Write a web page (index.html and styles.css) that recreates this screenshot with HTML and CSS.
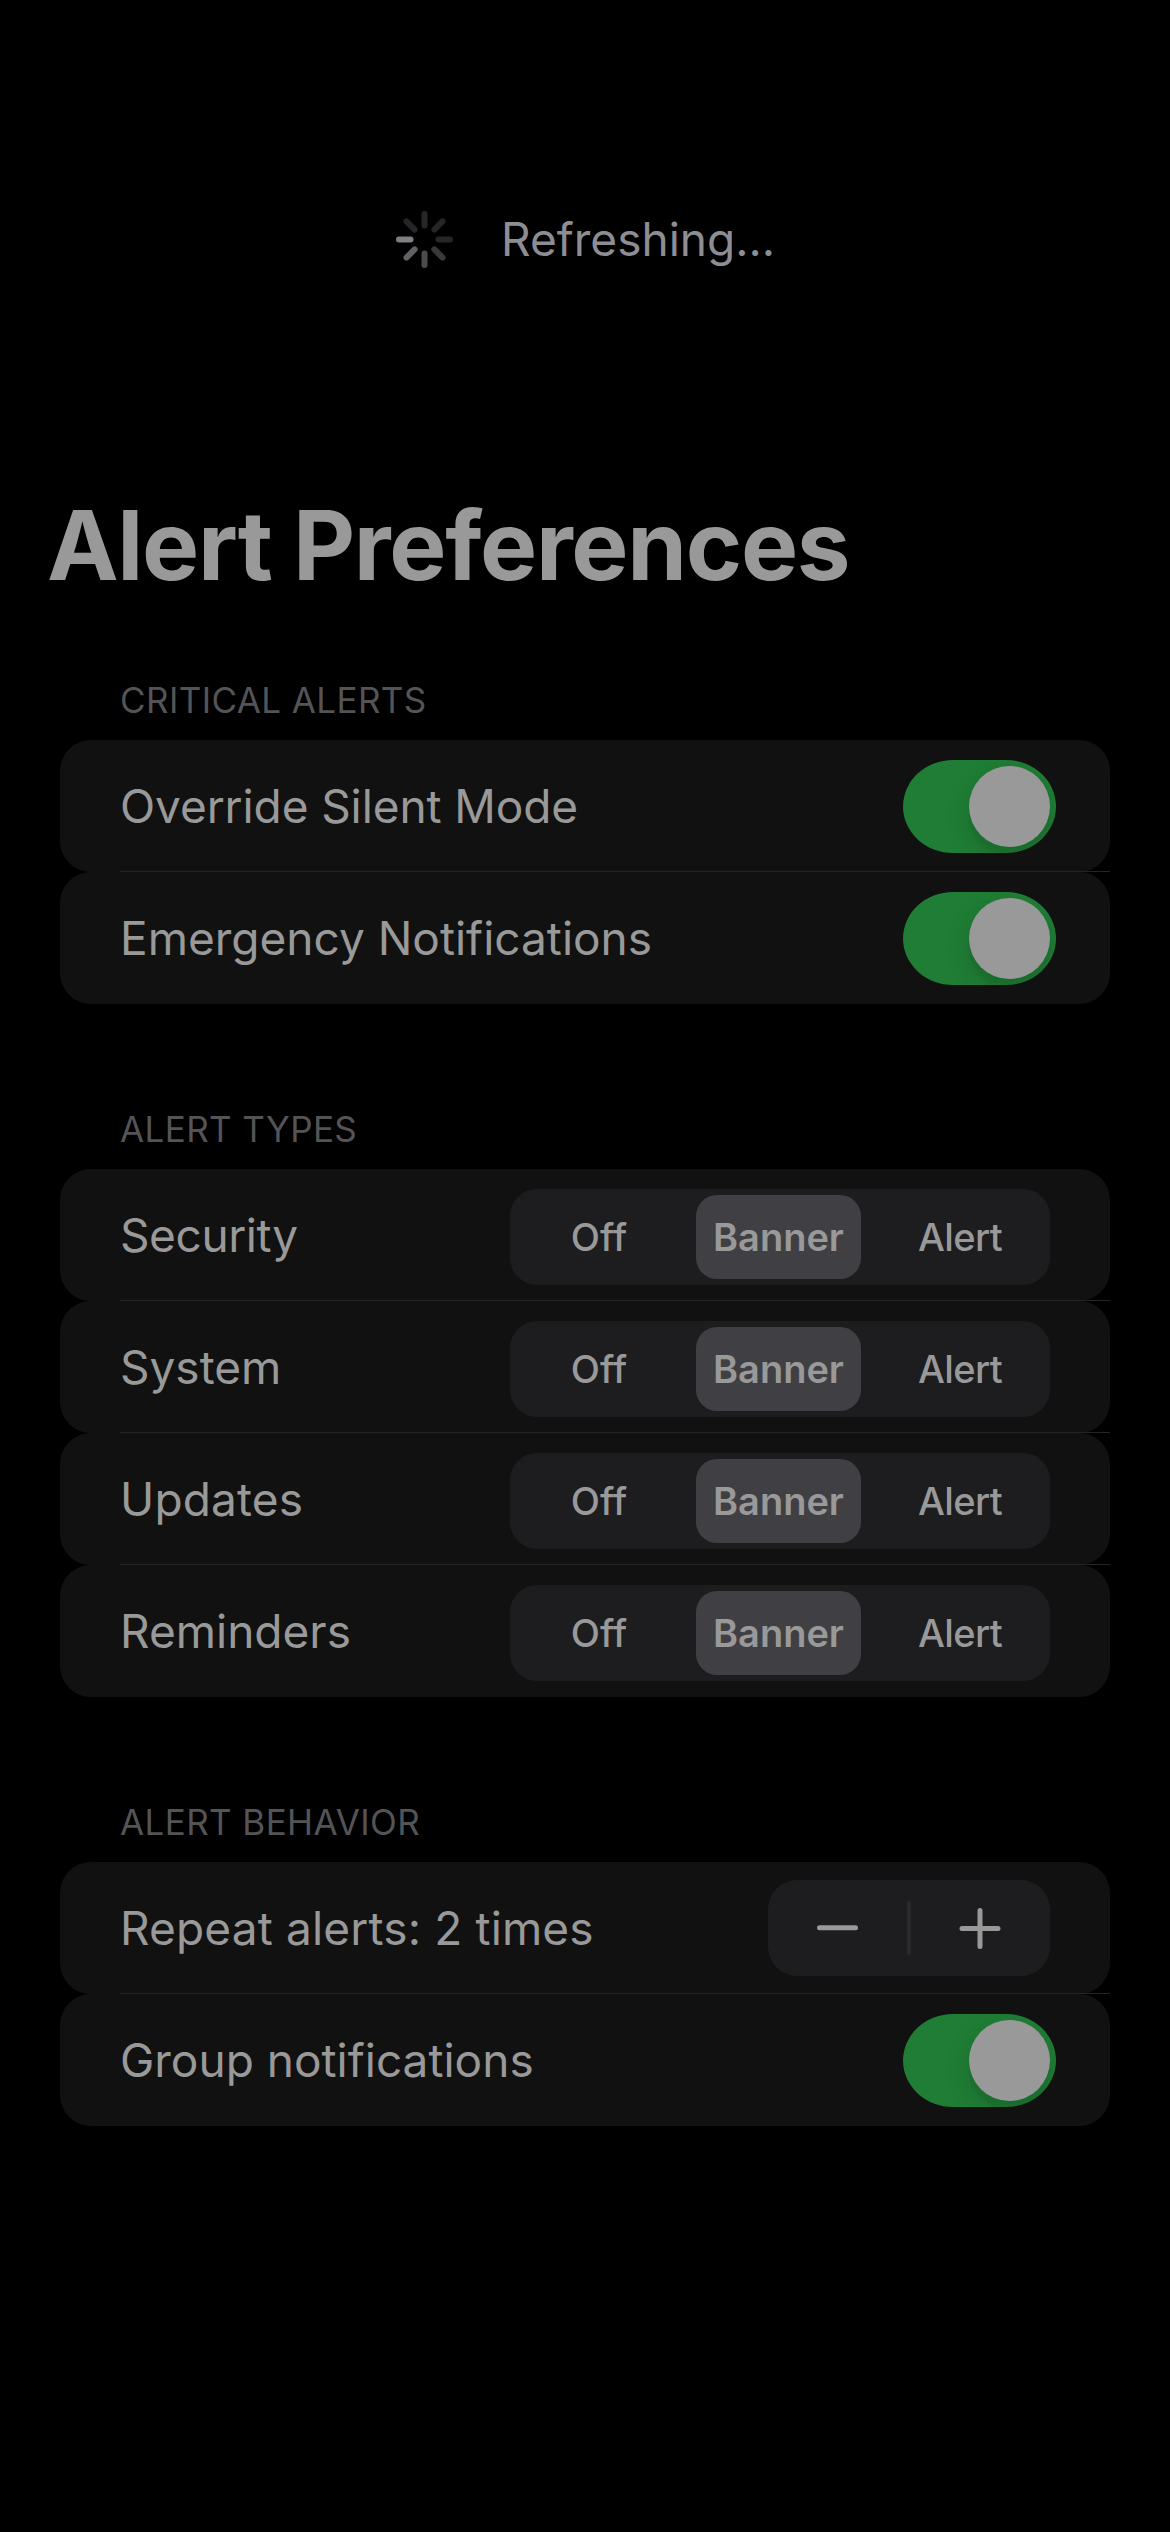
FILE: index.html
```html
<!DOCTYPE html>
<html lang="en">
<head>
<meta charset="utf-8">
<title>Alert Preferences</title>
<link rel="stylesheet" href="styles.css">
</head>
<body>
<div class="refresh">
  <svg class="spinner" viewBox="-28.5 -28.5 57 57" width="57" height="57" fill="none" stroke-width="6" stroke-linecap="round">
    <g stroke="#262628">
      <path d="M0-14V-25.5"/>
      <path d="M0-14V-25.5" transform="rotate(45)"/>
      <path d="M0-14V-25.5" transform="rotate(90)"/>
      <path d="M0-14V-25.5" transform="rotate(315)"/>
    </g>
    <path d="M0-14V-25.5" transform="rotate(135)" stroke="#39393b"/>
    <path d="M0-14V-25.5" transform="rotate(180)" stroke="#4b4b4e"/>
    <path d="M0-14V-25.5" transform="rotate(225)" stroke="#626166"/>
    <path d="M0-14V-25.5" transform="rotate(270)" stroke="#7f7e84"/>
  </svg>
  <span class="refresh-text">Refreshing...</span>
</div>
<main>
  <h1>Alert Preferences</h1>

  <section>
    <h2>CRITICAL ALERTS</h2>
    <div class="row"><span class="label snug">Override Silent Mode</span><div class="switch"><i class="knob"></i></div></div>
    <div class="row"><span class="label">Emergency Notifications</span><div class="switch"><i class="knob"></i></div></div>
  </section>

  <section>
    <h2>ALERT TYPES</h2>
    <div class="row"><span class="label tight">Security</span><div class="segments"><span class="segment off">Off</span><span class="segment selected">Banner</span><span class="segment alert">Alert</span></div></div>
    <div class="row"><span class="label">System</span><div class="segments"><span class="segment off">Off</span><span class="segment selected">Banner</span><span class="segment alert">Alert</span></div></div>
    <div class="row"><span class="label loose">Updates</span><div class="segments"><span class="segment off">Off</span><span class="segment selected">Banner</span><span class="segment alert">Alert</span></div></div>
    <div class="row"><span class="label">Reminders</span><div class="segments"><span class="segment off">Off</span><span class="segment selected">Banner</span><span class="segment alert">Alert</span></div></div>
  </section>

  <section>
    <h2>ALERT BEHAVIOR</h2>
    <div class="row"><span class="label loose">Repeat alerts: 2 times</span>
      <div class="stepper">
        <svg viewBox="0 0 282 96" width="282" height="96" fill="none" stroke="#999" stroke-width="5" stroke-linecap="round">
          <path d="M51.5 47.7H87.5"/>
          <path d="M141 22.5V73.5" stroke="#2b2b2d" stroke-width="3.4"/>
          <path d="M194 48.5H230M212 30.5V66.5"/>
        </svg>
      </div>
    </div>
    <div class="row"><span class="label">Group notifications</span><div class="switch"><i class="knob"></i></div></div>
  </section>
</main>
</body>
</html>
```
FILE: styles.css
```css
* { box-sizing: border-box; }

body {
  margin: 0;
  min-height: 2532px;
  background: #000;
  color: #999;
  font-family: Inter, "Liberation Sans", sans-serif;
}

.refresh {
  display: flex;
  align-items: center;
  gap: 48px;
  height: 479px;
  padding-left: 396px;
}

.refresh-text {
  padding-bottom: 2px;
  color: #8e8d93;
  font-size: 46px;
  line-height: 56px;
}

main { padding: 8px 60px 0; }

h1 {
  margin: 0 0 75px -13px;
  font-size: 96px;
  font-weight: 700;
  line-height: 116px;
  letter-spacing: -1.3px;
}

section { margin-bottom: 103px; }

h2 {
  margin: 0 0 18px 60px;
  color: #545457;
  font-size: 35px;
  font-weight: 400;
  line-height: 44px;
  letter-spacing: 0.4px;
}

.row {
  position: relative;
  display: flex;
  align-items: flex-start;
  justify-content: space-between;
  height: 132px;
  padding: 0 60px;
  border-radius: 31px;
  background: #111;
}

.row:not(:last-child)::after {
  content: "";
  position: absolute;
  z-index: 1;
  left: 60px;
  right: 0;
  bottom: 0;
  height: 1px;
  background: #252527;
}

.label {
  font-size: 46px;
  line-height: 132px;
}

.snug { letter-spacing: -0.1px; }

.tight { letter-spacing: -0.4px; }

.loose { letter-spacing: 0.15px; }

.switch {
  display: flex;
  justify-content: flex-end;
  width: 153px;
  height: 93px;
  margin: 20px -6px 0 0;
  padding: 6px;
  border-radius: 50px / 46.5px;
  background: #1f7d35;
  overflow: hidden;
}

.knob {
  width: 81px;
  height: 81px;
  border-radius: 50%;
  background: #999;
  box-shadow: 0 9px 24px rgba(0, 0, 0, 0.15), 0 9px 3px rgba(0, 0, 0, 0.04);
}

.segments {
  display: grid;
  grid-template-columns: 180px 165px 183px;
  gap: 0 6px;
  width: 540px;
  height: 96px;
  margin-top: 20px;
  padding: 6px 0;
  border-radius: 27px;
  background: #1d1d1f;
}

.segment {
  height: 84px;
  border-radius: 21px;
  font-size: 38px;
  font-weight: 500;
  line-height: 84px;
  text-align: center;
}

.off { padding-right: 2px; }

.alert {
  padding-left: 3px;
  letter-spacing: -0.6px;
}

.selected {
  background: #403f43;
  font-weight: 600;
}

.stepper {
  width: 282px;
  height: 96px;
  margin-top: 18px;
  border-radius: 29px;
  background: #1d1d1f;
}

.stepper svg { display: block; }
```
